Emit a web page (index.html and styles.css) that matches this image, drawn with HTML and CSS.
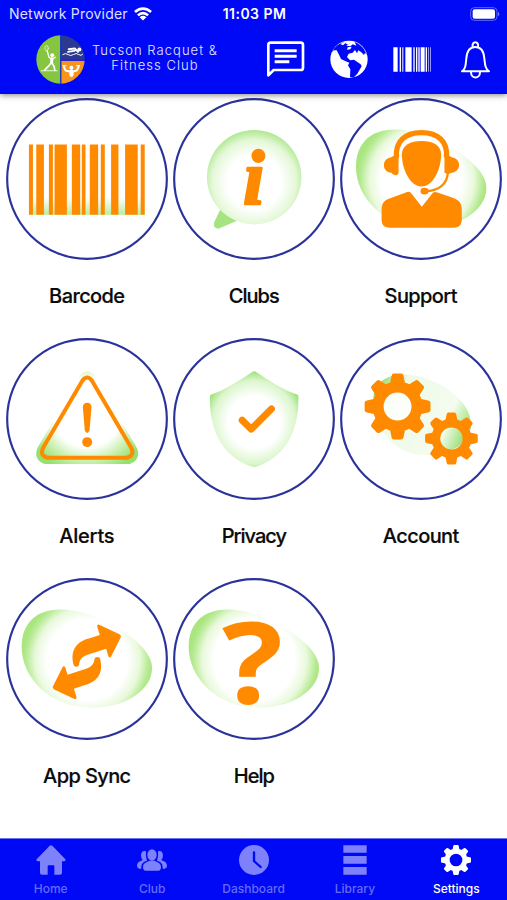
FILE: index.html
```html
<!DOCTYPE html>
<html lang="en">
<head>
    <meta charset="UTF-8">
    <meta name="viewport" content="width=device-width, initial-scale=1.0">
    <title>Tucson Racquet &amp; Fitness Club</title>
    <link rel="stylesheet" href="styles.css">
</head>
<body>

    <!-- Shared shapes -->
    <svg class="defs" width="0" height="0">
        <defs>
            <radialGradient id="blobFill" gradientUnits="userSpaceOnUse" cx="262" cy="255" r="196">
                <stop offset="0.62" stop-color="#fff"/>
                <stop offset="0.8" stop-color="#e9f9dc"/>
                <stop offset="0.94" stop-color="#b6ea92"/>
                <stop offset="1" stop-color="#aae67f"/>
            </radialGradient>
            <radialGradient id="bubbleFill" gradientUnits="userSpaceOnUse" cx="258" cy="262" r="162">
                <stop offset="0.5" stop-color="#fff"/>
                <stop offset="0.78" stop-color="#e4f8d7"/>
                <stop offset="1" stop-color="#a5e583"/>
            </radialGradient>
            <radialGradient id="shieldFill" gradientUnits="userSpaceOnUse" cx="258" cy="262" r="156">
                <stop offset="0.5" stop-color="#fff"/>
                <stop offset="0.8" stop-color="#dcf6cd"/>
                <stop offset="1" stop-color="#96e070"/>
            </radialGradient>
            <radialGradient id="alertFill" gradientUnits="userSpaceOnUse" cx="261" cy="235" r="185">
                <stop offset="0.55" stop-color="#fff"/>
                <stop offset="0.78" stop-color="#c9f0ae"/>
                <stop offset="1" stop-color="#96e070"/>
            </radialGradient>
            <linearGradient id="barFill" x1="0" y1="0" x2="0" y2="1">
                <stop offset="0.75" stop-color="#fff"/>
                <stop offset="1" stop-color="#b9eda0"/>
            </linearGradient>
            <linearGradient id="gearBack" x1="0" y1="0.2" x2="1" y2="0.6">
                <stop offset="0" stop-color="#8edb66"/>
                <stop offset="0.25" stop-color="#eefae6"/>
                <stop offset="0.78" stop-color="#f4fcef"/>
                <stop offset="1" stop-color="#9fe27c"/>
            </linearGradient>
            <linearGradient id="gearHole" x1="0" y1="0" x2="1" y2="0.4">
                <stop offset="0.2" stop-color="#f1fbea"/>
                <stop offset="1" stop-color="#a5e284"/>
            </linearGradient>
            <circle id="ring" r="240" fill="none" stroke="#2a329b" stroke-width="6.500"/>
            <path id="blob" fill="url(#blobFill)" d="M64 215C64 148 106 104 180 104C240 104 298 128 350 158C412 194 456 238 456 280C456 347 372 399 275 399C150 399 64 310 64 215Z"/>
            <path id="tooth" d="M-23 -68L-18 -92Q-17 -99 -11 -99H11Q17 -99 18 -92L23 -68Z"/>
            <g id="gear">
                <circle r="58.5" fill="none" stroke="currentColor" stroke-width="33"/>
                <g fill="currentColor">
                    <use href="#tooth"/>
                    <use href="#tooth" transform="rotate(45)"/>
                    <use href="#tooth" transform="rotate(90)"/>
                    <use href="#tooth" transform="rotate(135)"/>
                    <use href="#tooth" transform="rotate(180)"/>
                    <use href="#tooth" transform="rotate(225)"/>
                    <use href="#tooth" transform="rotate(270)"/>
                    <use href="#tooth" transform="rotate(315)"/>
                </g>
            </g>
            <path id="arrow" d="M221 273C207 224 232 200 266 191L299 180L291 155Q290 146 299 150L358 178Q365 183 361 189L333 245Q329 251 325 245L318 222L262 240C242 247 237 260 237 270Q232 280 221 273Z"/>
        </defs>
    </svg>

    <header class="header">
        <div class="status">
            <div class="carrier">
                <span>Network Provider</span>
                <svg class="wifi" viewBox="0 0 55 42">
                    <path fill="none" stroke="#fff" stroke-width="8" d="M3 15C17 1 38 1 52 15M12 25C21 16 34 16 43 25"/>
                    <path fill="#fff" d="M17 31Q27.500 22 38 31L27.500 41Z"/>
                </svg>
            </div>
            <span class="time">11:03 PM</span>
            <svg class="battery" viewBox="0 0 90 42">
                <rect x="2" y="2" width="79" height="38" rx="11" fill="none" stroke="#6268f8" stroke-width="3"/>
                <rect x="8" y="7" width="67" height="28" rx="6" fill="#fff"/>
                <path fill="#8286fb" d="M84 14Q92 21 84 28Z"/>
            </svg>
        </div>
        <div class="toolbar">
            <div class="brand">
                <svg class="logo" viewBox="107 104 148 148">
                    <clipPath id="disc"><circle cx="181" cy="178" r="73"/></clipPath>
                    <g clip-path="url(#disc)">
                        <rect x="107" y="104" width="73" height="148" fill="#86c540"/>
                        <rect x="183" y="104" width="73" height="75" fill="#2b3990"/>
                        <rect x="183" y="182" width="73" height="70" fill="#f7941e"/>
                        <rect x="179.500" y="104" width="4" height="148" fill="#1a3fb5"/>
                    </g>
                    <g fill="none" stroke="#fff" stroke-linecap="round" stroke-linejoin="round">
                        <ellipse cx="139" cy="144" rx="5" ry="8" stroke-width="2"/>
                        <path stroke-width="4" d="M141 152L146 171L155 178L165 171"/>
                        <path stroke-width="9" d="M155 176L154 188"/>
                        <path stroke-width="5" d="M153 188L144 199L133 210M156 189L162 200L164 211"/>
                        <path stroke-width="2.500" d="M123 212H171"/>
                        <path stroke-width="6" d="M206 147L224 145L234 155M204 155L223 152"/>
                        <path stroke-width="3" d="M188 163Q196 157 204 163T220 163T236 163T248 162"/>
                        <path stroke-width="6" d="M191 200L196 211L209 214M236 200L230 211L219 214"/>
                        <path stroke-width="13" d="M214 215V224"/>
                        <path stroke-width="3" d="M188 196L198 197M229 197L239 196"/>
                    </g>
                    <g fill="#fff">
                        <circle cx="156" cy="165" r="6"/>
                        <circle cx="238" cy="148" r="6"/>
                        <circle cx="214" cy="203" r="6"/>
                    </g>
                </svg>
                <div class="brand-name">Tucson Racquet &amp;<br>Fitness Club</div>
            </div>
            <div class="actions">
                <svg class="action" viewBox="42 120 117 117">
                    <path fill="none" stroke="#fff" stroke-width="8" stroke-linejoin="round" d="M46 226V135Q46 128 53 128H143Q150 128 150 135V203Q150 210 143 210H62Z"/>
                    <path fill="none" stroke="#fff" stroke-width="9" d="M65 152H131M65 169H131M65 185H109"/>
                </svg>
                <svg class="action" viewBox="231 120 117 117">
                    <circle cx="288" cy="178" r="56" fill="#fff"/>
                    <path fill="#0009f5" d="M236 158C246 138 258 130 274 126L262 132L270 136L278 128L290 130L280 137L292 139L299 133L310 137L305 126C324 133 336 149 341 164L336 158L333 165L325 157L316 151L312 160L306 150L299 158L287 161L282 171L291 181L303 179L323 193L326 199L313 221L301 233L291 231L292 208L285 196L289 188L278 184L264 177L258 164L251 151L242 151Z"/>
                    <path fill="#fff" d="M276 129L292 126L285 134ZM284 142L296 140L292 148L282 149Z"/>
                </svg>
                <svg class="action" viewBox="420 120 117 117">
                    <path fill="#fff" d="M421 142H434V215H421ZM440 142H444V215H440ZM448 142H451V215H448ZM457 142H476V215H457ZM481 142H485V215H481ZM489 142H493V215H489ZM496 142H500V215H496ZM503 142H515V215H503ZM518 142H522V215H518Z"/>
                    <path fill="#9498fc" d="M525 142H528V215H525ZM531 142H534V215H531Z"/>
                </svg>
                <svg class="action" viewBox="609 120 117 117">
                    <g fill="none" stroke="#fff" stroke-width="6" stroke-linejoin="round">
                        <path d="M627 214C638 207 638 195 640 175C642 151 652 141 667 141C682 141 692 151 694 175C696 195 697 207 708 214Z"/>
                        <path d="M659 141C655 122 679 122 675 141M654 216C654 238 681 238 681 216"/>
                    </g>
                </svg>
            </div>
        </div>
    </header>

    <main class="tiles">
        <div class="tile">
            <svg class="tile-icon" viewBox="17 9 487 487">
                <use href="#ring" x="260.500" y="252.500"/>
                <rect x="87" y="149" width="347" height="211" fill="url(#barFill)"/>
                <path fill="#ff8a00" d="M86 149H98V360H86ZM108 149H131V360H108ZM146 149H158V360H146ZM163 149H200V360H163ZM215 149H240V360H215ZM245 149H256V360H245ZM269 149H294V360H269ZM302 149H314V360H302ZM333 149H355V360H333ZM375 149H413V360H375ZM422 149H434V360H422Z"/>
            </svg>
            <span class="tile-label">Barcode</span>
        </div>
        <div class="tile">
            <svg class="tile-icon" viewBox="14 9 487 487">
                <use href="#ring" x="257.500" y="252.500"/>
                <path fill="#a6e383" d="M156 345L138 382Q133 401 150 402L212 376Z"/>
                <circle cx="258" cy="247" r="142" fill="url(#bubbleFill)"/>
                <text class="glyph-info" x="257" y="327">i</text>
            </svg>
            <span class="tile-label narrow">Clubs</span>
        </div>
        <div class="tile">
            <svg class="tile-icon" viewBox="11 9 487 487">
                <use href="#ring" x="254.500" y="252.500"/>
                <use href="#blob" transform="translate(-5 0)"/>
                <!-- white gap around the agent -->
                <path fill="#fff" d="M190 165C205 118 310 118 325 165V240L300 292L257 336L210 292L190 240Z"/>
                <g fill="#ff8a00">
                    <path d="M197 178C197 151 223 138 256 138C290 138 315 151 315 178C315 222 291 275 256 275C221 275 197 222 197 178Z"/>
                    <path d="M187 184V232Q187 241 177 241Q168 240 166 234C151 232 143 223 143 211C143 198 151 190 165 187L174 182Z"/>
                    <path d="M325 184V234Q336 240 347 234C361 231 369 222 369 211C369 198 361 190 347 187L338 182Z"/>
                    <path d="M136 345C136 323 146 315 162 310L211 292Q220 288 225 295L257 336L289 295Q294 289 304 293L350 309C370 316 377 326 377 345V377Q375 399 353 399H160Q138 399 136 377Z"/>
                    <ellipse cx="265" cy="289" rx="12" ry="10"/>
                </g>
                <g fill="none" stroke="#ff8a00">
                    <path stroke-width="16" d="M181 189C176 140 206 113 256 113C306 113 336 140 331 189"/>
                    <path stroke-width="7" d="M335 235C333 269 306 289 268 289"/>
                </g>
            </svg>
            <span class="tile-label">Support</span>
        </div>
        <div class="tile">
            <svg class="tile-icon" viewBox="17 9 487 487">
                <use href="#ring" x="260.500" y="252.500"/>
                <path fill="url(#alertFill)" stroke="url(#alertFill)" stroke-width="28" stroke-linejoin="round" d="M252 128Q261 118 270 128L396 342Q408 366 386 374H136Q114 366 126 342Z"/>
                <path fill="none" stroke="#ff8a00" stroke-width="12" stroke-linejoin="round" d="M247 137Q261 119 275 137L394 340Q404 363 380 369H142Q118 363 128 340Z"/>
                <path fill="#ff8a00" d="M248 217C248 199 274 199 274 217L268 288Q261 301 254 288Z"/>
                <circle cx="261" cy="322" r="15" fill="#ff8a00"/>
            </svg>
            <span class="tile-label wide">Alerts</span>
        </div>
        <div class="tile">
            <svg class="tile-icon" viewBox="14 9 487 487">
                <use href="#ring" x="257.500" y="252.500"/>
                <path fill="url(#shieldFill)" d="M251 112Q258 106 265 112C303 137 350 168 387 179Q391 180 391 185C393 292 350 368 263 396Q258 399 253 396C166 368 123 292 125 185Q125 180 129 179C166 168 213 137 251 112Z"/>
                <path fill="none" stroke="#ff8a00" stroke-width="21" stroke-linecap="round" stroke-linejoin="round" d="M222 256L249 283L310 222"/>
            </svg>
            <span class="tile-label narrow">Privacy</span>
        </div>
        <div class="tile">
            <svg class="tile-icon gears" viewBox="11 9 487 487">
                <use href="#ring" x="254.500" y="252.500"/>
                <path fill="url(#gearBack)" d="M112 180C120 130 175 110 235 122C320 138 405 200 405 270C405 325 340 361 265 361C170 361 98 265 112 180Z"/>
                <circle cx="184" cy="215" r="44" fill="#fbfef9"/>
                <circle cx="346" cy="311" r="32" fill="url(#gearHole)"/>
                <use href="#gear" transform="translate(184 215)"/>
                <use href="#gear" transform="translate(346 311) scale(0.8 0.79)"/>
            </svg>
            <span class="tile-label">Account</span>
        </div>
        <div class="tile">
            <svg class="tile-icon" viewBox="17 9 487 487">
                <use href="#ring" x="260.500" y="252.500"/>
                <use href="#blob"/>
                <g fill="#ff8a00">
                    <use href="#arrow"/>
                    <use href="#arrow" transform="rotate(180 260 261)"/>
                </g>
            </svg>
            <span class="tile-label">App Sync</span>
        </div>
        <div class="tile">
            <svg class="tile-icon" viewBox="14 9 487 487">
                <use href="#ring" x="257.500" y="252.500"/>
                <use href="#blob" transform="translate(-3 0)"/>
                <text class="glyph-help" transform="translate(253 388) scale(1.130 1)">?</text>
            </svg>
            <span class="tile-label narrow">Help</span>
        </div>
    </main>

    <nav class="tabs">
        <div class="tab">
            <svg viewBox="0 0 90 90"><path fill="currentColor" d="M41 2Q45 -1 49 2L88 43Q91 48 84 49H78V83Q78 89 72 89H55V64Q55 61 52 61H38Q35 61 35 64V89H18Q12 89 12 83V49H6Q-1 48 2 43Z"/></svg>
            <span>Home</span>
        </div>
        <div class="tab">
            <svg viewBox="0 0 90 90">
                <g fill="currentColor">
                    <ellipse cx="45" cy="30" rx="14" ry="17"/>
                    <path d="M18 66C18 53 30 52 37 47H53C60 52 72 53 72 66Q72 77 64 77H26Q18 77 18 66Z"/>
                    <path d="M27 19Q13 15 12 32Q13 42 18 45C8 49 0 52 0 63Q0 70 7 71H13C12 56 18 51 30 47Q25 35 27 19ZM63 19Q77 15 78 32Q77 42 72 45C82 49 90 52 90 63Q90 70 83 71H77C78 56 72 51 60 47Q65 35 63 19Z"/>
                </g>
            </svg>
            <span>Club</span>
        </div>
        <div class="tab">
            <svg viewBox="0 0 90 90">
                <circle cx="45" cy="45" r="45" fill="currentColor"/>
                <path fill="none" stroke="#0009f5" stroke-width="7" stroke-linecap="round" stroke-linejoin="round" d="M45 22V48L65 66"/>
            </svg>
            <span>Dashboard</span>
        </div>
        <div class="tab">
            <svg viewBox="0 0 90 90"><path fill="currentColor" d="M10 1H80V23H10ZM10 33H80V56H10ZM10 66H80V89H10Z"/></svg>
            <span>Library</span>
        </div>
        <div class="tab active">
            <svg viewBox="-45 -45 90 90"><use href="#gear" transform="scale(0.455)"/></svg>
            <span>Settings</span>
        </div>
    </nav>

</body>
</html>
```
FILE: styles.css
```css
* {
    box-sizing: border-box;
}

body, html {
    height: 100%;
    margin: 0;
    font-family: Inter, "Liberation Sans", sans-serif;
    background-color: #fff;
    overflow: hidden;
}

body {
    display: flex;
    flex-direction: column;
}

svg {
    display: block;
    overflow: visible;
}

.defs {
    position: absolute;
}

.header {
    height: 93.5px;
    flex: none;
    background-color: #0009f5;
    color: #fff;
    box-shadow: 0 1px 6px rgba(0, 0, 0, 0.5);
    z-index: 1;
}

.status {
    display: grid;
    grid-template-columns: 1fr auto 1fr;
    align-items: center;
    height: 27px;
    padding: 0 7px 0 9px;
    font-size: 14px;
}

.carrier {
    display: flex;
    align-items: center;
    gap: 6px;
    color: #dfe0ff;
    letter-spacing: 0.2px;
    white-space: nowrap;
}

.wifi {
    width: 18px;
    height: 14px;
}

.time {
    font-weight: 600;
    letter-spacing: 0.45px;
}

.battery {
    width: 30px;
    height: 14px;
    justify-self: end;
}

.toolbar {
    display: flex;
    justify-content: space-between;
    align-items: center;
    height: 65px;
    padding: 0 12px 0 36px;
}

.brand {
    display: flex;
    align-items: center;
    gap: 7px;
}

.logo {
    width: 49px;
    height: 49px;
}

.brand-name {
    font-size: 13px;
    font-weight: 300;
    line-height: 15.5px;
    text-align: center;
    letter-spacing: 1.05px;
    white-space: nowrap;
    padding-bottom: 3px;
    color: #e6e7ff;
}

.actions {
    display: flex;
    gap: 24px;
}

.action {
    width: 39px;
    height: 39px;
}

.tiles {
    flex: 1;
    display: grid;
    grid-template-columns: repeat(3, 167px);
    grid-auto-rows: 240px;
    padding: 4.7px 2.7px 0 3.3px;
}

.tile {
    display: flex;
    flex-direction: column;
    align-items: center;
}

.tile-icon {
    width: 162px;
    height: 162px;
}

.gears {
    color: #ff8a00;
}

.glyph-info {
    font-family: "Liberation Serif", serif;
    font-size: 234px;
    font-weight: bold;
    font-style: italic;
    text-anchor: middle;
    fill: #ff8a00;
    stroke: #ff8a00;
    stroke-width: 7px;
    stroke-linejoin: round;
}

.glyph-help {
    font-family: "Open Sans", sans-serif;
    font-size: 340px;
    font-weight: 700;
    text-anchor: middle;
    fill: #ff8a00;
}

.tile-label {
    margin-top: 24px;
    font-size: 20px;
    font-weight: 500;
    line-height: 24px;
    letter-spacing: -0.6px;
    color: #0a0a0a;
    -webkit-text-stroke: 0.2px #0a0a0a;
}

.tile-label.narrow {
    letter-spacing: -1px;
}

.tile-label.wide {
    letter-spacing: -0.2px;
}

.tabs {
    flex: none;
    display: flex;
    height: 62px;
    background-color: #0009f5;
    border-top: 1px solid #6a70ee;
}

.tab {
    flex: 1;
    display: flex;
    flex-direction: column;
    align-items: center;
    padding-top: 6px;
    color: #7d82fb;
    font-size: 12px;
    font-weight: 500;
    line-height: 15px;
}

.tab svg {
    width: 30px;
    height: 30px;
    margin-bottom: 6px;
}

.tab span {
    color: #666cf9;
}

.tab.active,
.tab.active span {
    color: #fff;
}
```
